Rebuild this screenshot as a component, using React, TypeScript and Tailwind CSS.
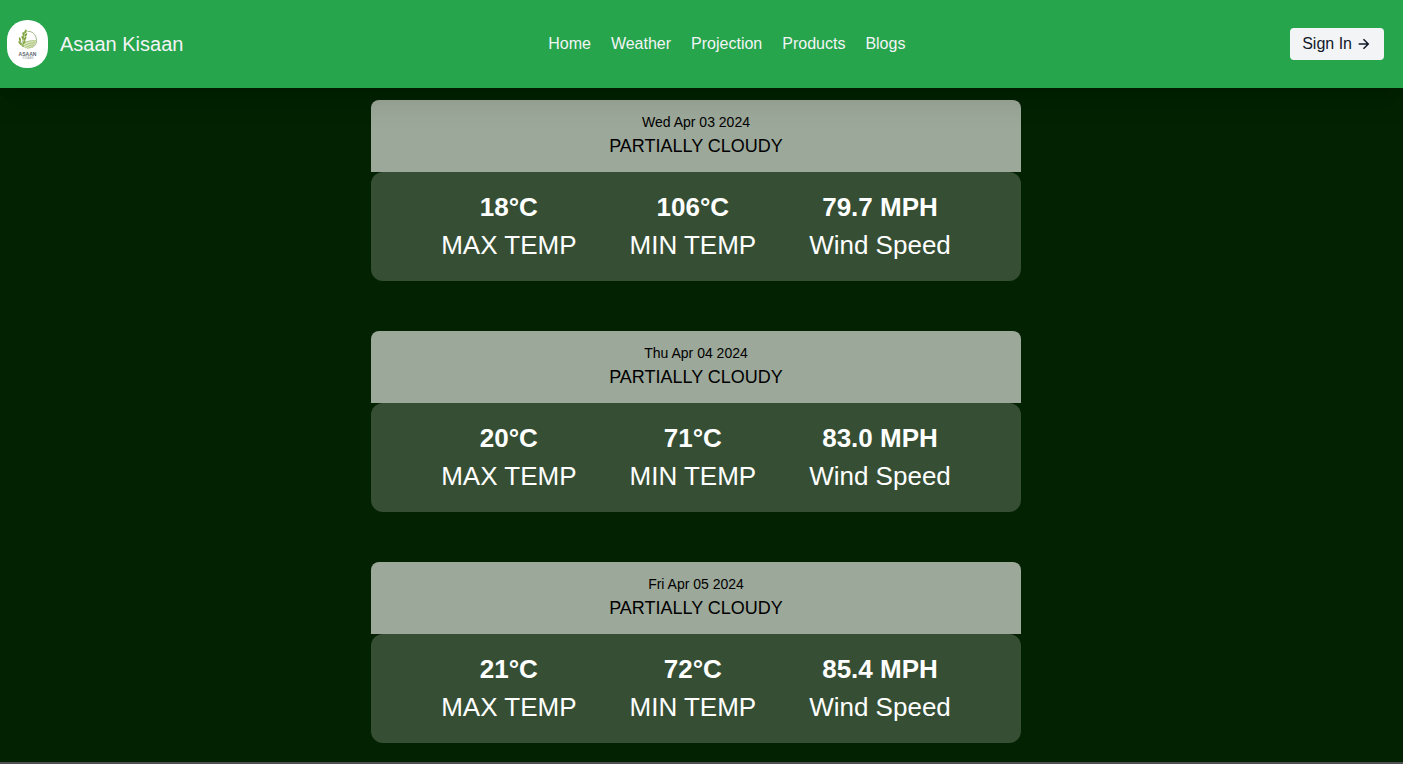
import React from "react";

type Day = { date: string; sky: string; max: string; min: string; wind: string };

const days: Day[] = [
  { date: "Wed Apr 03 2024", sky: "PARTIALLY CLOUDY", max: "18°C", min: "106°C", wind: "79.7 MPH" },
  { date: "Thu Apr 04 2024", sky: "PARTIALLY CLOUDY", max: "20°C", min: "71°C", wind: "83.0 MPH" },
  { date: "Fri Apr 05 2024", sky: "PARTIALLY CLOUDY", max: "21°C", min: "72°C", wind: "85.4 MPH" },
];

const links = ["Home", "Weather", "Projection", "Products", "Blogs"];

function Logo() {
  return (
    <svg viewBox="0 0 41 48" className="h-12 w-[41px] rounded-[20px] bg-white" aria-hidden="true">
      {/* ring */}
      <path d="M20.4 11.3 A8.8 8.8 0 0 1 25.6 27.4" fill="none" stroke="#8aa56c" strokeWidth="0.8" />
      {/* field */}
      <path d="M14.4 25 C17.4 21.4 23 19.8 29.2 20.8 C28.6 25.4 25.4 28.6 21 28.6 C18 28.6 15.6 27.2 14.4 25Z" fill="#dce8c2" />
      <path
        d="M14.4 25.4 C18 21.6 23 20.2 29.2 20.9 M16 26.9 C19.4 23.8 23.6 22.6 28.6 22.9 M18 28 C20.6 25.9 23.8 24.9 27.6 25 M20.4 28.6 C22.4 27.4 24 27 26 27"
        fill="none"
        stroke="#94b05c"
        strokeWidth="0.7"
      />
      {/* wheat */}
      <path d="M16.2 27 C15.4 21 16.2 15.4 18.6 10.4 M15.6 26.4 C14.4 24.4 13.4 21.6 13 18.6" fill="none" stroke="#77993b" strokeWidth="0.8" />
      <g fill="#7fa33c">
        <ellipse cx="18.6" cy="11.4" rx="1" ry="2" transform="rotate(16 18.6 11.4)" />
        <ellipse cx="16.4" cy="14" rx="1" ry="2" transform="rotate(-12 16.4 14)" />
        <ellipse cx="18.9" cy="15" rx="1" ry="2" transform="rotate(34 18.9 15)" />
        <ellipse cx="15.6" cy="17.6" rx="1" ry="2" transform="rotate(-16 15.6 17.6)" />
        <ellipse cx="18" cy="18.6" rx="1" ry="2" transform="rotate(34 18 18.6)" />
        <ellipse cx="12.8" cy="19.2" rx="0.9" ry="2" transform="rotate(-8 12.8 19.2)" />
        <ellipse cx="12.8" cy="23" rx="0.9" ry="2.2" transform="rotate(-34 12.8 23)" />
        <ellipse cx="17.3" cy="22" rx="0.9" ry="1.9" transform="rotate(30 17.3 22)" />
      </g>
      <text x="20.5" y="36" textAnchor="middle" fontSize="5" fontWeight="700" fill="#5b666c">
        ASAAN
      </text>
      <text x="21" y="39" textAnchor="middle" fontSize="3" fill="#9aa1a5">
        KISAAN
      </text>
    </svg>
  );
}

function Stat({ value, label }: { value: string; label: string }) {
  return (
    <div className="text-center text-[26px] leading-[38px] text-white">
      <p className="font-bold">{value}</p>
      <p>{label}</p>
    </div>
  );
}

function DayCard({ day }: { day: Day }) {
  return (
    <article className="w-full max-w-[650px]">
      <header className="rounded-t-lg bg-[#9ca89a] p-3 text-center text-black">
        <p className="text-sm">{day.date}</p>
        <h2 className="text-lg">{day.sky}</h2>
      </header>
      <div className="flex flex-wrap justify-center gap-x-[53px] rounded-xl bg-[#364f34] pt-4 pb-[17px]">
        <Stat value={day.max} label="MAX TEMP" />
        <Stat value={day.min} label="MIN TEMP" />
        <Stat value={day.wind} label="Wind Speed" />
      </div>
    </article>
  );
}

export default function App() {
  return (
    <div className="flex min-h-screen flex-col bg-[#022202] font-['Liberation_Sans',Arial,sans-serif]">
      <header className="relative z-10 flex items-center justify-between bg-[#26a54d] py-5 pr-[19px] pl-[7px] shadow-xl">
        <a href="#home" className="flex items-center gap-3 text-xl text-gray-100">
          <Logo />
          <span>Asaan Kisaan</span>
        </a>
        <nav className="flex gap-5 pr-5 text-base text-gray-100">
          {links.map((link) => (
            <a key={link} href={"#" + link.toLowerCase()}>
              {link}
            </a>
          ))}
        </nav>
        <button type="button" className="flex items-center gap-1 rounded bg-gray-100 px-3 py-1 text-base text-gray-900">
          Sign In
          <svg viewBox="0 0 24 24" className="size-4" fill="currentColor" aria-hidden="true">
            <path d="M12 4l-1.6 1.6L15.8 10.9H4v2.2h11.8l-5.4 5.3L12 20l8-8z" />
          </svg>
        </button>
      </header>
      <main className="flex flex-1 flex-col items-center gap-[50px] pt-3 pr-[11px] pb-[19px]">
        {days.map((day) => (
          <DayCard key={day.date} day={day} />
        ))}
      </main>
      <footer className="h-0.5 bg-[#505052]" />
    </div>
  );
}
